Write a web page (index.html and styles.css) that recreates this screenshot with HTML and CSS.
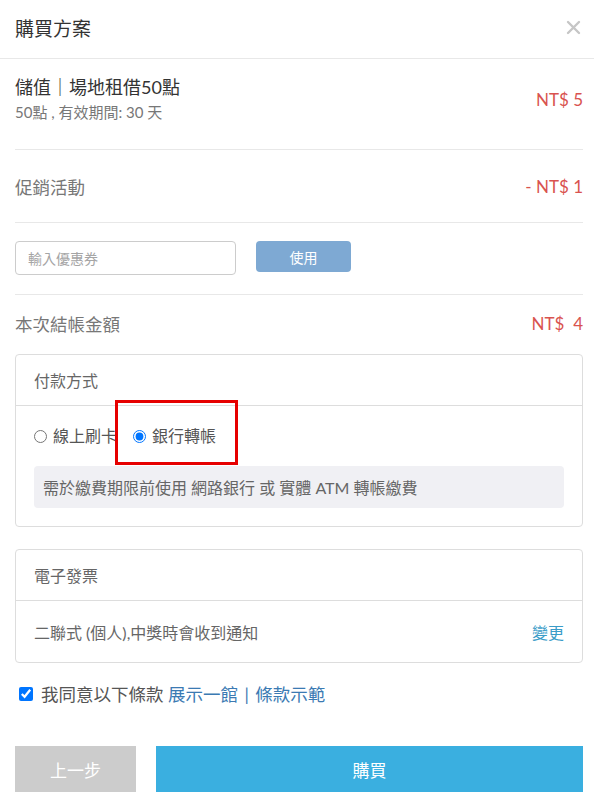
FILE: index.html
```html
<!DOCTYPE html>
<html lang="zh-Hant">
<head>
  <meta charset="UTF-8" />
  <meta name="viewport" content="width=device-width, initial-scale=1.0" />
  <title>購買方案</title>
  <link rel="stylesheet" href="styles.css">
</head>
<body>
  <div class="modal">
    <div class="modal-header">
      <h1>購買方案</h1>
      <span class="close">
        <svg width="15" height="15" viewBox="0 0 15 15">
          <path d="M2 2 L13 13 M13 2 L2 13" stroke="#c6c6c6" stroke-width="2.4" stroke-linecap="round" />
        </svg>
      </span>
    </div>

    <div class="row item-row">
      <div class="item-info">
        <div class="item-title">儲值｜場地租借50點</div>
        <div class="item-sub">50點 , 有效期間: 30 天</div>
      </div>
      <div class="price">NT$ 5</div>
    </div>

    <div class="row promo-row">
      <div class="label">促銷活動</div>
      <div class="price">- NT$ 1</div>
    </div>

    <div class="row coupon-row">
      <input type="text" class="coupon-input" placeholder="輸入優惠券">
      <button class="btn-use">使用</button>
    </div>

    <div class="total-row">
      <div class="label">本次結帳金額</div>
      <div class="price">NT$&nbsp; 4</div>
    </div>

    <div class="card">
      <div class="card-header">付款方式</div>
      <div class="card-body">
        <div class="radios">
          <label class="radio"><input type="radio" name="pay"> 線上刷卡</label>
          <label class="radio"><input type="radio" name="pay" checked> 銀行轉帳</label>
        </div>
        <div class="notice">需於繳費期限前使用 網路銀行 或 實體 ATM 轉帳繳費</div>
      </div>
      <!-- 標示框 -->
      <div class="highlight"></div>
    </div>

    <div class="card invoice">
      <div class="card-header">電子發票</div>
      <div class="card-body invoice-body">
        <span>二聯式 (個人),中獎時會收到通知</span>
        <a href="#" class="change">變更</a>
      </div>
    </div>

    <label class="agree">
      <input type="checkbox" checked>
      <span>我同意以下條款 <a href="#">展示一館</a> <span class="sep">|</span> <a href="#">條款示範</a></span>
    </label>

    <div class="actions">
      <button class="btn btn-prev">上一步</button>
      <button class="btn btn-buy">購買</button>
    </div>
  </div>
</body>
</html>
```

FILE: styles.css
```css
:root {
  --red: #d9534f;
  --line: #e8e8e8;
  --border: #dddddd;
  --text: #333;
  --muted: #777;
}

* {
  box-sizing: border-box;
  margin: 0;
  padding: 0;
  font-family: 'Lato', 'Noto Sans CJK TC', sans-serif;
}

body {
  background: #fff;
  color: var(--text);
}

.modal {
  width: 594px;
  padding: 0 11px 0 15px;
}

.modal-header {
  height: 59px;
  display: flex;
  align-items: center;
  justify-content: space-between;
  border-bottom: 1px solid var(--line);
  margin: 0 -11px 0 -15px;
  padding: 0 13px 4px 15px;
}

.modal-header h1 {
  font-size: 19px;
  font-weight: 400;
  color: #333;
}

.close {
  display: flex;
}

.row {
  display: flex;
  align-items: center;
  justify-content: space-between;
  border-bottom: 1px solid var(--line);
}

.item-row {
  padding: 16px 0 25px;
}

.item-title {
  font-size: 18px;
  line-height: 25px;
  color: #333;
}

.item-sub {
  font-size: 15px;
  line-height: 24px;
  color: #777;
}

.price {
  font-size: 17px;
  color: var(--red);
}

.promo-row {
  height: 73px;
}

.label {
  font-size: 17.5px;
  color: var(--muted);
}

.coupon-row {
  justify-content: flex-start;
  align-items: flex-start;
  gap: 20px;
  padding: 18px 0 19px;
}

.coupon-input {
  width: 221px;
  height: 34px;
  border: 1px solid #ccc;
  border-radius: 4px;
  padding: 0 12px;
  font-size: 14px;
  color: #555;
}

.coupon-input::placeholder {
  color: #a5a5a5;
}

.btn-use {
  width: 95px;
  height: 31px;
  border: none;
  border-radius: 4px;
  background: #7ea9d3;
  color: #fff;
  font-size: 14px;
}

.total-row {
  display: flex;
  justify-content: space-between;
  align-items: center;
  height: 59px;
  padding-bottom: 2px;
}

.card {
  position: relative;
  border: 1px solid var(--border);
  border-radius: 4px;
}

.card-header {
  height: 51px;
  padding: 0 18px;
  display: flex;
  align-items: center;
  font-size: 16px;
  color: #666;
  border-bottom: 1px solid var(--border);
}

.card-body {
  padding: 21px 18px 18px;
}

.radios {
  display: flex;
  gap: 16px;
  margin-bottom: 21px;
}

.radio {
  display: flex;
  align-items: center;
  gap: 6px;
  font-size: 16px;
  color: #555;
  line-height: 18px;
}

.radio input {
  width: 13px;
  height: 13px;
  margin: 0;
}

.notice {
  background: #f0f0f4;
  border-radius: 4px;
  height: 42px;
  display: flex;
  align-items: center;
  padding: 0 9px;
  font-size: 16px;
  color: #666;
}

.highlight {
  position: absolute;
  left: 99px;
  top: 45px;
  width: 123px;
  height: 65px;
  border: 3px solid #e60000;
}

.invoice {
  margin-top: 22px;
}

.invoice-body {
  display: flex;
  justify-content: space-between;
  align-items: center;
  height: 61px;
  padding: 0 18px;
  font-size: 16px;
  color: #666;
}

.change {
  color: #3a9cc8;
  text-decoration: none;
  font-size: 16px;
}

.agree {
  display: flex;
  align-items: center;
  gap: 8px;
  margin: 18px 0 0 4px;
  font-size: 17.5px;
  color: #555;
}

.agree input {
  width: 14px;
  height: 14px;
  margin: 0;
}

.agree a {
  color: #3b7ab3;
  text-decoration: none;
}

.sep {
  color: #3b7ab3;
  margin: 0 2px;
}

.actions {
  display: flex;
  gap: 20px;
  margin-top: 40px;
}

.btn {
  height: 46px;
  border: none;
  color: #fff;
  font-size: 17px;
}

.btn-prev {
  width: 121px;
  background: #cccccc;
}

.btn-buy {
  flex: 1;
  background: #3aafe0;
}
```
